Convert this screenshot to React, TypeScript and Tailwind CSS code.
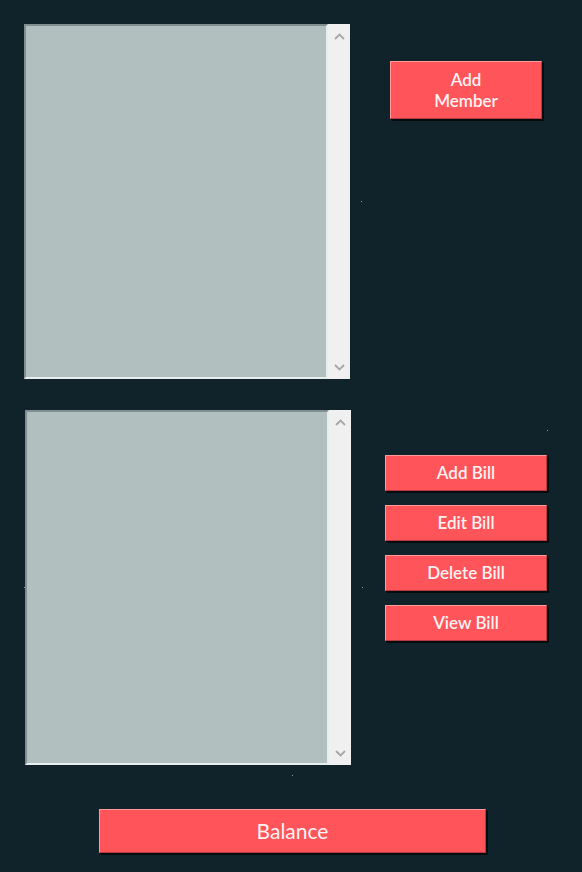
import React from "react";

const Chevron = ({ dir }: { dir: "up" | "down" }) => (
  <svg width="11" height="7" viewBox="0 0 11 7" className="block">
    <path
      d={dir === "up" ? "M1 6 L5.5 1.5 L10 6" : "M1 1 L5.5 5.5 L10 1"}
      fill="none"
      stroke="#a6a6a6"
      strokeWidth="1.8"
    />
  </svg>
);

const ListBox = () => (
  <div className="flex w-[326px] h-[355px] shrink-0">
    <div className="flex-1 bg-[#b2bfbf] border-t-2 border-l-2 border-t-[#7f8e8e] border-l-[#7f8e8e] border-b-2 border-r-2 border-b-[#e6eeee] border-r-[#e6eeee]" />
    <div className="w-[22px] bg-[#f0f0f0] flex flex-col items-center justify-between pt-[9px] pb-[8px]">
      <Chevron dir="up" />
      <Chevron dir="down" />
    </div>
  </div>
);

const Btn = ({
  children,
  className,
}: {
  children: React.ReactNode;
  className: string;
}) => (
  <button
    className={
      "bg-[#ff545a] text-[#fff2f2] border border-t-[#ff9a9a] border-l-[#ff9a9a] border-b-[#b83a3e] border-r-[#b83a3e] shadow-[1px_1px_0_#050b0e,2px_2px_0_#050b0e] flex items-center justify-center text-center " +
      className
    }
    style={{ fontFamily: "Lato, 'Open Sans', sans-serif" }}
  >
    {children}
  </button>
);

export default function App() {
  return (
    <div className="relative w-[582px] h-[872px] bg-[#10222a] overflow-hidden">
      <div className="flex pt-[24px] pl-[24px]">
        <ListBox />
        <Btn className="ml-[40px] mt-[37px] w-[152px] h-[58px] text-[17px] leading-[21px] font-semibold">
          Add
          <br />
          Member
        </Btn>
      </div>
      <div className="flex mt-[31px] pl-[25px]">
        <ListBox />
        <div className="flex flex-col gap-[14px] ml-[34px] mt-[45px]">
          <Btn className="w-[162px] h-[36px] text-[17px] font-semibold">Add Bill</Btn>
          <Btn className="w-[162px] h-[36px] text-[17px] font-semibold">Edit Bill</Btn>
          <Btn className="w-[162px] h-[36px] text-[17px] font-semibold">Delete Bill</Btn>
          <Btn className="w-[162px] h-[36px] text-[17px] font-semibold">View Bill</Btn>
        </div>
      </div>
      <div className="mt-[44px] pl-[99px]">
        <Btn className="w-[387px] h-[44px] text-[21px] font-normal">Balance</Btn>
      </div>
      <div className="absolute left-[361px] top-[201px] w-px h-px bg-[#8a9aa0]" />
      <div className="absolute left-[547px] top-[430px] w-px h-px bg-[#8a9aa0]" />
      <div className="absolute left-[24px] top-[587px] w-px h-px bg-[#8a9aa0]" />
      <div className="absolute left-[362px] top-[587px] w-px h-px bg-[#8a9aa0]" />
      <div className="absolute left-[292px] top-[775px] w-px h-px bg-[#8a9aa0]" />
    </div>
  );
}
